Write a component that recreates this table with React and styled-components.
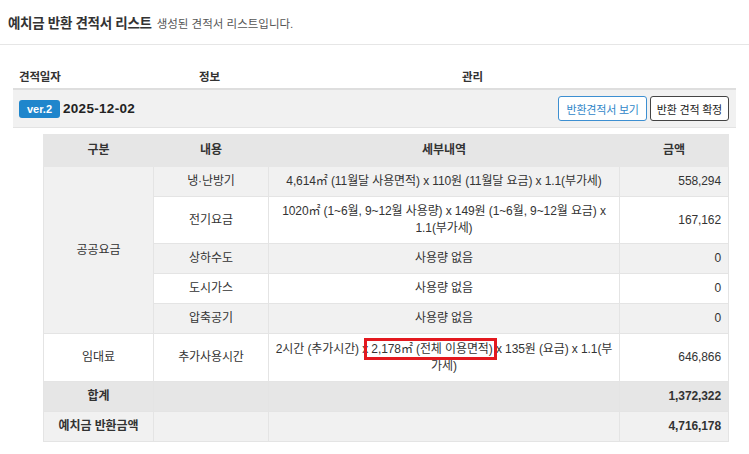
import styled, { createGlobalStyle } from 'styled-components'

const GlobalStyle = createGlobalStyle`
  body {
    margin: 0;
    background: #fff;
    color: #333;
    font-family: "Liberation Sans", "Noto Sans CJK KR", sans-serif;
  }
`

const PageHeader = styled.div`
  display: flex;
  align-items: baseline;
  gap: 5px;
  height: 45px;
  padding: 12px 8px 0;
  box-sizing: border-box;
  border-bottom: 1px solid #e6e6e6;
`

const PageTitle = styled.h1`
  margin: 0;
  font-size: 13.5px;
  font-weight: bold;
  letter-spacing: -0.3px;
  color: #333;
`

const PageDesc = styled.span`
  font-size: 11.5px;
  color: #555;
`

const List = styled.section`
  padding: 0 13px;
`

const ListHead = styled.div`
  display: grid;
  grid-template-columns: 180px 263px 1fr;
  height: 45px;
  align-items: end;
  padding: 0 6px 4px;
  box-sizing: border-box;
  border-bottom: 2px solid #dedede;
  font-size: 11.5px;
  font-weight: bold;
  letter-spacing: -0.2px;
`

const ListRow = styled.div`
  display: flex;
  align-items: center;
  height: 38px;
  padding: 0 7px 0 6px;
  box-sizing: border-box;
  background: #f1f1f1;
  border-bottom: 1px solid #e3e3e3;
`

const VersionBadge = styled.span`
  display: inline-flex;
  align-items: center;
  justify-content: center;
  width: 41px;
  height: 18px;
  border-radius: 3px;
  background: #1f86cc;
  color: #fff;
  font-size: 11px;
  font-weight: bold;
`

const DateText = styled.span`
  margin-left: 3px;
  font-size: 13.5px;
  font-weight: bold;
  letter-spacing: 0.3px;
  color: #222;
`

const Actions = styled.div`
  display: flex;
  gap: 3px;
  margin-left: auto;
`

const ActionButton = styled.button`
  height: 25px;
  padding: 0 ${({ $primary }) => ($primary ? '7px' : '6px')};
  border: 1px solid ${({ $primary }) => ($primary ? '#3d8fd1' : '#444')};
  border-radius: 3px;
  background: #fff;
  color: ${({ $primary }) => ($primary ? '#2f86c8' : '#222')};
  font-family: inherit;
  font-size: 11px;
  letter-spacing: -0.2px;
  cursor: pointer;
`

const Detail = styled.div`
  padding: 6px 7px 0 30px;
`

const Table = styled.table`
  width: 100%;
  border-collapse: collapse;
  table-layout: fixed;
  font-size: 12px;
  letter-spacing: -0.1px;
  line-height: 17px;
`

const Th = styled.th`
  height: 31px;
  padding: 0 6px;
  background: #e6e6e6;
  border: 1px solid #e6e6e6;
  font-weight: bold;
  text-align: center;
`

const Td = styled.td`
  padding: 6px ${({ $align }) => ($align === 'right' ? '7px' : '3px')};
  border: 1px solid #e4e4e4;
  text-align: ${({ $align }) => $align || 'center'};
  font-weight: ${({ $bold }) => ($bold ? 'bold' : 'normal')};
  vertical-align: middle;
`

const Tr = styled.tr`
  height: ${({ $height }) => $height || 30}px;
  background: ${({ $tone }) =>
    $tone === 'dark' ? '#e6e6e6' : $tone === 'gray' ? '#f1f1f1' : '#fff'};
`

const Mark = styled.span`
  outline: 3px solid #e3191f;
  outline-offset: 1px;
`

const utilities = [
  {
    name: '냉·난방기',
    detail: '4,614㎡ (11월달 사용면적) x 110원 (11월달 요금) x 1.1(부가세)',
    amount: '558,294',
  },
  {
    name: '전기요금',
    detail: '1020㎡ (1~6월, 9~12월 사용량) x 149원 (1~6월, 9~12월 요금) x 1.1(부가세)',
    amount: '167,162',
    height: 46,
  },
  { name: '상하수도', detail: '사용량 없음', amount: '0' },
  { name: '도시가스', detail: '사용량 없음', amount: '0' },
  { name: '압축공기', detail: '사용량 없음', amount: '0' },
]

export default function App() {
  return (
    <>
      <GlobalStyle />
      <PageHeader>
        <PageTitle>예치금 반환 견적서 리스트</PageTitle>
        <PageDesc>생성된 견적서 리스트입니다.</PageDesc>
      </PageHeader>
      <List>
        <ListHead>
          <span>견적일자</span>
          <span>정보</span>
          <span>관리</span>
        </ListHead>
        <ListRow>
          <VersionBadge>ver.2</VersionBadge>
          <DateText>2025-12-02</DateText>
          <Actions>
            <ActionButton $primary>반환견적서 보기</ActionButton>
            <ActionButton>반환 견적 확정</ActionButton>
          </Actions>
        </ListRow>
        <Detail>
          <Table>
            <colgroup>
              <col style={{ width: 110 }} />
              <col style={{ width: 115 }} />
              <col />
              <col style={{ width: 109 }} />
            </colgroup>
            <thead>
              <tr>
                <Th>구분</Th>
                <Th>내용</Th>
                <Th>세부내역</Th>
                <Th>금액</Th>
              </tr>
            </thead>
            <tbody>
              {utilities.map((row, i) => (
                <Tr key={row.name} $tone={i % 2 === 0 ? 'gray' : 'white'} $height={row.height}>
                  {i === 0 && <Td rowSpan={utilities.length}>공공요금</Td>}
                  <Td>{row.name}</Td>
                  <Td>{row.detail}</Td>
                  <Td $align="right">{row.amount}</Td>
                </Tr>
              ))}
              <Tr $height={48}>
                <Td>임대료</Td>
                <Td>추가사용시간</Td>
                <Td>
                  2시간 (추가시간) x<Mark> 2,178㎡ (전체 이용면적)</Mark> x 135원 (요금) x 1.1(부가세)
                </Td>
                <Td $align="right">646,866</Td>
              </Tr>
              <Tr $tone="dark">
                <Td $bold>합계</Td>
                <Td />
                <Td />
                <Td $bold $align="right">1,372,322</Td>
              </Tr>
              <Tr $tone="gray">
                <Td $bold>예치금 반환금액</Td>
                <Td />
                <Td />
                <Td $bold $align="right">4,716,178</Td>
              </Tr>
            </tbody>
          </Table>
        </Detail>
      </List>
    </>
  )
}
